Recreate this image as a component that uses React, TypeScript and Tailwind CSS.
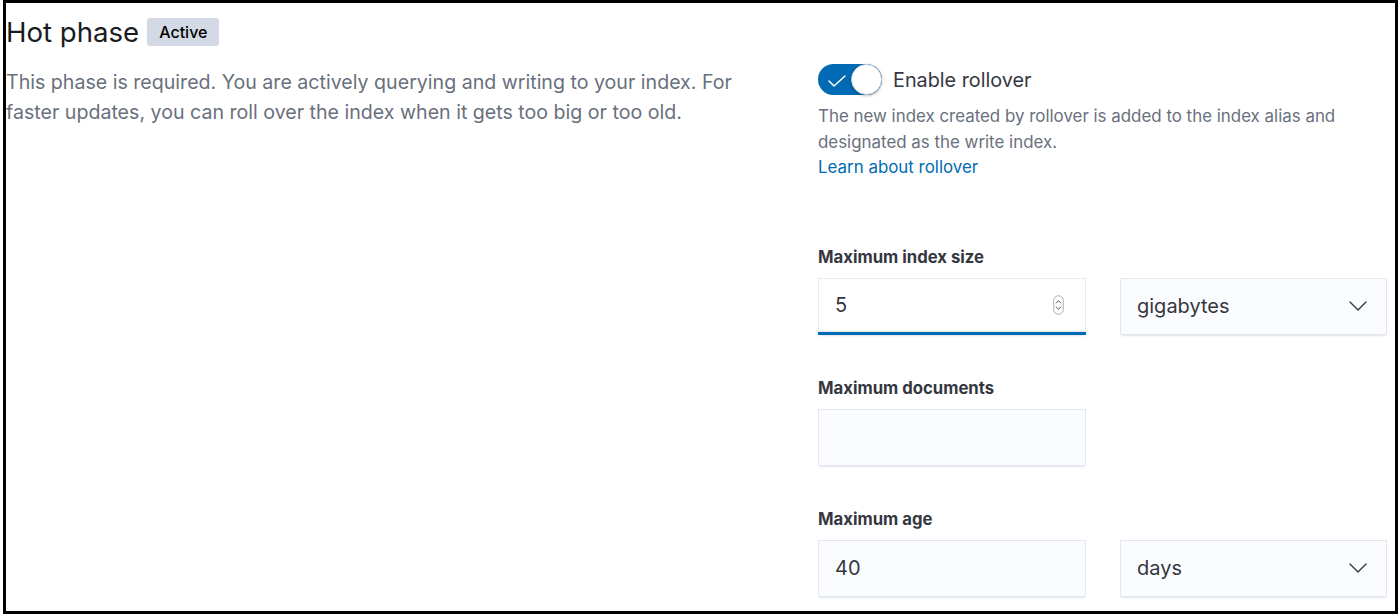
import React from "react";

const fieldShadow =
  "shadow-[0_1px_1px_-1px_rgba(152,162,179,0.25),0_3px_2px_-2px_rgba(152,162,179,0.25),inset_0_0_0_1px_rgba(15,39,118,0.1)]";

function Chevron() {
  return (
    <svg width="18" height="10" viewBox="0 0 18 10" fill="none">
      <path d="M1 1l8 8 8-8" stroke="#343741" strokeWidth="1.4" strokeLinecap="round" strokeLinejoin="round" />
    </svg>
  );
}

function Spinner() {
  return (
    <svg width="11" height="20" viewBox="0 0 11 20" fill="none">
      <rect x="0.75" y="0.75" width="9.5" height="18.5" rx="4.75" stroke="#a7adb8" strokeWidth="1" fill="#fff" />
      <path d="M3.3 8l2.2-2.4L7.7 8" stroke="#535966" strokeWidth="1" strokeLinecap="round" strokeLinejoin="round" />
      <path d="M3.3 12l2.2 2.4L7.7 12" stroke="#535966" strokeWidth="1" strokeLinecap="round" strokeLinejoin="round" />
    </svg>
  );
}

function SelectBox({ value }: { value: string }) {
  return (
    <div
      className={`w-[267px] h-[57px] bg-[#fbfcfd] ${fieldShadow} flex items-center justify-between pl-[17px] pr-[20px] text-[20px] text-[#343741]`}
    >
      <span>{value}</span>
      <Chevron />
    </div>
  );
}

function Label({ children }: { children: React.ReactNode }) {
  return <div className="text-[16.7px] leading-[22px] font-bold text-[#343741]">{children}</div>;
}

export default function App() {
  return (
    <div className="w-[1400px] h-[615px] bg-white font-['Inter',sans-serif]">
      <div className="ml-[3px] w-[1395px] h-[614px] border-[3px] border-black flex">
        <div className="w-[812px] pt-[12px]">
          <div className="flex items-center h-[34px]">
            <span className="text-[27.6px] leading-[34px] text-[#1a1c21]">Hot phase</span>
            <span className="ml-[8px] h-[28px] px-[12px] rounded-[3px] bg-[#d3dae6] text-[16px] font-medium text-black flex items-center">
              Active
            </span>
          </div>
          <p className="mt-[19px] text-[19.6px] leading-[29.5px] text-[#69707d] w-[790px]">
            This phase is required. You are actively querying and writing to your index. For
            <br />
            faster updates, you can roll over the index when it gets too big or too old.
          </p>
        </div>
        <div className="pt-[61px]">
          <div className="flex items-center">
            <div className="w-[64px] h-[31px] rounded-full bg-[#006bb4] flex items-center justify-between">
              <svg width="20" height="14" viewBox="0 0 20 14" fill="none" className="ml-[9px] mt-[3px]">
                <path d="M2 7l5 5L18 2" stroke="#fff" strokeWidth="1.5" strokeLinecap="round" strokeLinejoin="round" />
              </svg>
              <div className="w-[31px] h-[31px] rounded-full bg-white border border-[#c9d0dc] shadow-[0_1px_3px_rgba(0,0,0,0.25)]" />
            </div>
            <span className="ml-[11px] text-[19.8px] leading-[28px] text-[#343741]">Enable rollover</span>
          </div>
          <div className="mt-[9px] text-[16.9px] leading-[25.6px] text-[#69707d]">
            The new index created by rollover is added to the index alias and
            <br />
            designated as the write index.
            <br />
            <span className="text-[#006bb4]">Learn about rollover</span>
          </div>

          <div className="mt-[65px]">
            <Label>Maximum index size</Label>
            <div className="mt-[10px] flex gap-[34px]">
              <div
                className={`w-[268px] h-[57px] bg-white ${fieldShadow} border-b-[3px] border-[#006bb4] flex items-center justify-between pl-[17px] pr-[22px] text-[20px] text-[#343741]`}
              >
                <span>5</span>
                <Spinner />
              </div>
              <SelectBox value="gigabytes" />
            </div>
          </div>

          <div className="mt-[42px]">
            <Label>Maximum documents</Label>
            <div className="mt-[10px] flex gap-[34px]">
              <div className={`w-[268px] h-[57px] bg-[#fbfcfd] ${fieldShadow}`} />
            </div>
          </div>

          <div className="mt-[42px]">
            <Label>Maximum age</Label>
            <div className="mt-[10px] flex gap-[34px]">
              <div
                className={`w-[268px] h-[57px] bg-[#fbfcfd] ${fieldShadow} flex items-center pl-[17px] text-[20px] text-[#343741]`}
              >
                <span>40</span>
              </div>
              <SelectBox value="days" />
            </div>
          </div>
        </div>
      </div>
    </div>
  );
}
